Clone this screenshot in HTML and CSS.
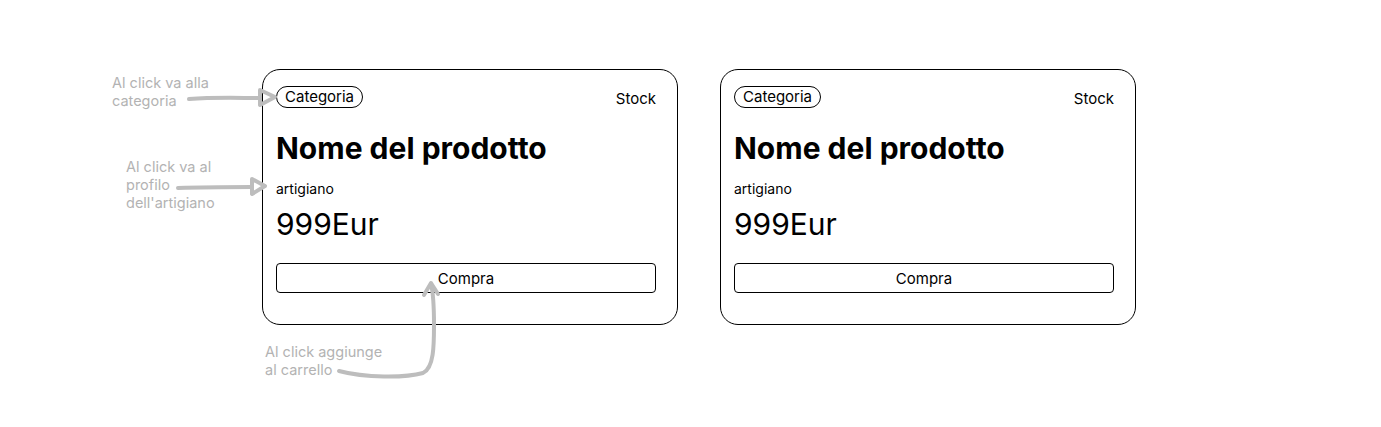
FILE: index.html
```html
<!DOCTYPE html>
<html lang="it">
<head>
<meta charset="utf-8">
<title>Prodotti</title>
<link rel="stylesheet" href="styles.css">
</head>
<body>
<div class="canvas">
  <div class="cards">
    <div class="card">
      <div class="card-top">
        <span class="pill">Categoria</span>
        <span class="stock">Stock</span>
      </div>
      <h2 class="title">Nome del prodotto</h2>
      <div class="maker">artigiano</div>
      <div class="price">999Eur</div>
      <button class="buy">Compra</button>
    </div>
    <div class="card">
      <div class="card-top">
        <span class="pill">Categoria</span>
        <span class="stock">Stock</span>
      </div>
      <h2 class="title">Nome del prodotto</h2>
      <div class="maker">artigiano</div>
      <div class="price">999Eur</div>
      <button class="buy">Compra</button>
    </div>
  </div>

  <div class="note note-cat">Al click va alla<br>categoria</div>
  <div class="note note-maker">Al click va al<br>profilo<br>dell'artigiano</div>
  <div class="note note-cart">Al click aggiunge<br>al carrello</div>

  <svg class="arrows" width="1381" height="427" viewBox="0 0 1381 427">
    <g fill="none" stroke="#bdbdbd" stroke-width="4" stroke-linecap="round" stroke-linejoin="round">
      <path d="M189 99 C215 97 240 98 259 98"/>
      <path d="M260 90 L275 97 L260 105 Z"/>
      <path d="M178 188 C205 187 230 187 251 187"/>
      <path d="M252 179 L265 186 L252 194 Z"/>
      <path d="M339 371 C365 378 405 378 423 373 C434 368 434 345 434 325 C434 305 433 292 431 284"/>
      <path d="M424 295 L431 283 L438 294"/>
    </g>
  </svg>
</div>
</body>
</html>
```
FILE: styles.css
```css
* { box-sizing: border-box; }
html, body { margin: 0; padding: 0; background: #ffffff; }
body { font-family: "Inter", "Roboto", "Liberation Sans", sans-serif; color: #000; }

.canvas {
  position: relative;
  width: 1381px;
  height: 427px;
  overflow: hidden;
}

.cards {
  display: flex;
  gap: 42px;
  padding: 69px 0 0 262px;
}

.card {
  width: 416px;
  height: 256px;
  border: 1px solid #000;
  border-radius: 18px;
  padding: 16px 21px 0 13px;
  display: flex;
  flex-direction: column;
}

.card-top {
  display: flex;
  justify-content: space-between;
  align-items: center;
  height: 22px;
}

.pill {
  border: 1px solid #000;
  border-radius: 11px;
  height: 22px;
  padding: 0 8px;
  font-size: 15px;
  line-height: 20px;
}

.stock {
  font-size: 15px;
  padding-top: 2px;
}

.title {
  margin: 22px 0 0 0;
  font-size: 30px;
  font-weight: 700;
  line-height: 36px;
  letter-spacing: 0;
}

.maker {
  margin-top: 14px;
  font-size: 14px;
  line-height: 18px;
}

.price {
  margin-top: 8px;
  font-size: 30px;
  line-height: 36px;
}

.buy {
  margin-top: 21px;
  width: 100%;
  height: 30px;
  border: 1px solid #000;
  border-radius: 4px;
  background: #fff;
  font-family: inherit;
  font-size: 15px;
  color: #000;
  padding: 0;
}

.note {
  position: absolute;
  font-size: 14.5px;
  line-height: 18px;
  color: #b3b3b3;
}
.note-cat { left: 112px; top: 74px; }
.note-maker { left: 126px; top: 158px; }
.note-cart { left: 265px; top: 343px; }

.arrows {
  position: absolute;
  left: 0;
  top: 0;
  pointer-events: none;
}
```
